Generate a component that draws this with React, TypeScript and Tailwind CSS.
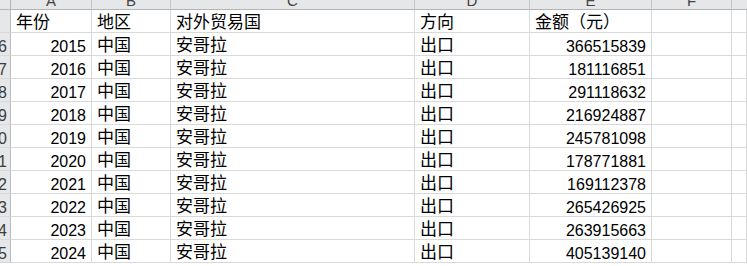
import React from "react";

type Row = {
  num: number;
  year: string;
  region: string;
  partner: string;
  direction: string;
  amount: string;
};

const rows: Row[] = [
  { num: 16, year: "2015", region: "中国", partner: "安哥拉", direction: "出口", amount: "366515839" },
  { num: 17, year: "2016", region: "中国", partner: "安哥拉", direction: "出口", amount: "181116851" },
  { num: 18, year: "2017", region: "中国", partner: "安哥拉", direction: "出口", amount: "291118632" },
  { num: 19, year: "2018", region: "中国", partner: "安哥拉", direction: "出口", amount: "216924887" },
  { num: 20, year: "2019", region: "中国", partner: "安哥拉", direction: "出口", amount: "245781098" },
  { num: 21, year: "2020", region: "中国", partner: "安哥拉", direction: "出口", amount: "178771881" },
  { num: 22, year: "2021", region: "中国", partner: "安哥拉", direction: "出口", amount: "169112378" },
  { num: 23, year: "2022", region: "中国", partner: "安哥拉", direction: "出口", amount: "265426925" },
  { num: 24, year: "2023", region: "中国", partner: "安哥拉", direction: "出口", amount: "263915663" },
  { num: 25, year: "2024", region: "中国", partner: "安哥拉", direction: "出口", amount: "405139140" },
];

const letters = ["A", "B", "C", "D", "E", "F"];

// last column (G) runs off the right edge, so its letter stays hidden
const gridCols = "grid w-[747px] grid-cols-[11px_81px_79px_244px_115px_122px_80px_1fr]";

// plain cell, bottom aligned like Excel
function Cell({ children, right, cjk }: { children?: React.ReactNode; right?: boolean; cjk?: boolean }) {
  return (
    <div
      className={
        "flex h-[23px] items-end overflow-hidden whitespace-nowrap border-b border-r border-[#d9d9d9] leading-none text-black " +
        (right ? "justify-end pr-[5px] " : "pl-[5px] ") +
        (cjk ? "pb-[1px] text-[17px]" : "text-[16px]")
      }
    >
      {children}
    </div>
  );
}

function RowHead({ n }: { n?: number }) {
  return (
    <div className="flex h-[23px] items-end justify-end overflow-hidden whitespace-nowrap border-b border-r border-b-[#d9d9d9] border-r-[#bdbdbd] bg-[#e6e7e9] pr-[3px] text-[16px] leading-none text-[#3c3c3c]">
      {n !== undefined && <span>{n}</span>}
    </div>
  );
}

export default function App() {
  return (
    <div
      className="h-[266px] w-[747px] overflow-hidden bg-white"
      style={{ fontFamily: '"Liberation Sans", "Noto Sans CJK SC", sans-serif' }}
    >
      {/* column letters, top half cut off */}
      <div className={gridCols}>
        <div className="h-[10px] border-b border-r border-[#b4b4b4] bg-[#e6e7e9]" />
        {letters.map((l) => (
          <div
            key={l}
            className="flex h-[10px] items-end justify-center overflow-hidden border-b border-r border-b-[#b4b4b4] border-r-[#c6c6c6] bg-[#e6e7e9] pb-[1px] text-[15px] leading-none text-[#444]"
          >
            {l}
          </div>
        ))}
        <div className="h-[10px] border-b border-[#b4b4b4] bg-[#e6e7e9]" />
      </div>

      {/* header row */}
      <div className={gridCols}>
        <RowHead />
        <Cell cjk>年份</Cell>
        <Cell cjk>地区</Cell>
        <Cell cjk>对外贸易国</Cell>
        <Cell cjk>方向</Cell>
        <Cell cjk>金额（元）</Cell>
        <Cell />
        <Cell />
      </div>

      {rows.map((r) => (
        <div key={r.num} className={gridCols}>
          <RowHead n={r.num} />
          <Cell right>{r.year}</Cell>
          <Cell cjk>{r.region}</Cell>
          <Cell cjk>{r.partner}</Cell>
          <Cell cjk>{r.direction}</Cell>
          <Cell right>{r.amount}</Cell>
          <Cell />
          <Cell />
        </div>
      ))}
    </div>
  );
}
